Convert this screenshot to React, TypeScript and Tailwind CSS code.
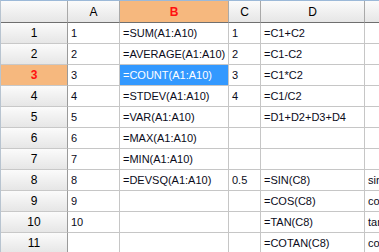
import React from 'react';

const COLS = ['A', 'B', 'C', 'D', 'E'];
const SEL_COL = 'B';
const SEL_ROW = 3;

const DATA: Record<number, string[]> = {
  1:  ['1',  '=SUM(A1:A10)',     '1',   '=C1+C2',          ''],
  2:  ['2',  '=AVERAGE(A1:A10)', '2',   '=C1-C2',          ''],
  3:  ['3',  '=COUNT(A1:A10)',   '3',   '=C1*C2',          ''],
  4:  ['4',  '=STDEV(A1:A10)',   '4',   '=C1/C2',          ''],
  5:  ['5',  '=VAR(A1:A10)',     '',    '=D1+D2+D3+D4',    ''],
  6:  ['6',  '=MAX(A1:A10)',     '',    '',                ''],
  7:  ['7',  '=MIN(A1:A10)',     '',    '',                ''],
  8:  ['8',  '=DEVSQ(A1:A10)',   '0.5', '=SIN(C8)',        'sin'],
  9:  ['9',  '',                 '',    '=COS(C8)',        'cos'],
  10: ['10', '',                 '',    '=TAN(C8)',        'tan'],
  11: ['',   '',                 '',    '=COTAN(C8)',      'cotan'],
};

const headBase  = "flex items-center justify-center border-r border-b border-r-[#a9a9a9] border-b-[#6f6f6f] text-[12px]";
const rowBase   = "flex items-center justify-center border-r border-b border-r-[#9a9a9a] border-b-[#c8c8c8] text-[12px]";
const plainHead = "bg-gradient-to-b from-[#fbfbfb] to-[#e6e6e6] text-black";
const selHead   = "bg-[#f6b87e] text-[#ff1010] font-bold";
const cellBase  = "flex items-center px-[3px] border-r border-b border-[#c6c6c6] text-[11px] whitespace-nowrap overflow-hidden";

const App = () => {
  return (
    <div
      className="w-[379px] h-[252px] overflow-hidden bg-white border-t border-l border-t-[#9cb9d8] border-l-[#b8c4d0]"
      style={{ fontFamily: '"Liberation Sans", Arial, sans-serif' }}
    >
      <div className="grid grid-cols-[67px_52px_109px_32px_104px_60px] grid-rows-[22px_repeat(11,21px)]">
        {/* corner + column headers */}
        <div className={`${headBase} ${plainHead}`}></div>
        {COLS.map(c => (
          <div key={c} className={`${headBase} ${c === SEL_COL ? selHead : plainHead}`}>{c}</div>
        ))}

        {/* rows */}
        {Object.keys(DATA).map(k => {
          const r = Number(k);
          const cells = DATA[r];
          return (
            <React.Fragment key={r}>
              <div className={`${rowBase} ${r === SEL_ROW ? selHead : plainHead}`}>{r}</div>
              {cells.map((v, i) => {
                const selected = r === SEL_ROW && COLS[i] === SEL_COL;
                return (
                  <div
                    key={i}
                    className={`${cellBase} ${selected ? 'bg-[#3399ff] text-white' : 'bg-white text-[#0b0b1a]'}`}
                  >
                    {v}
                  </div>
                );
              })}
            </React.Fragment>
          );
        })}
      </div>
    </div>
  );
};

export default App;
